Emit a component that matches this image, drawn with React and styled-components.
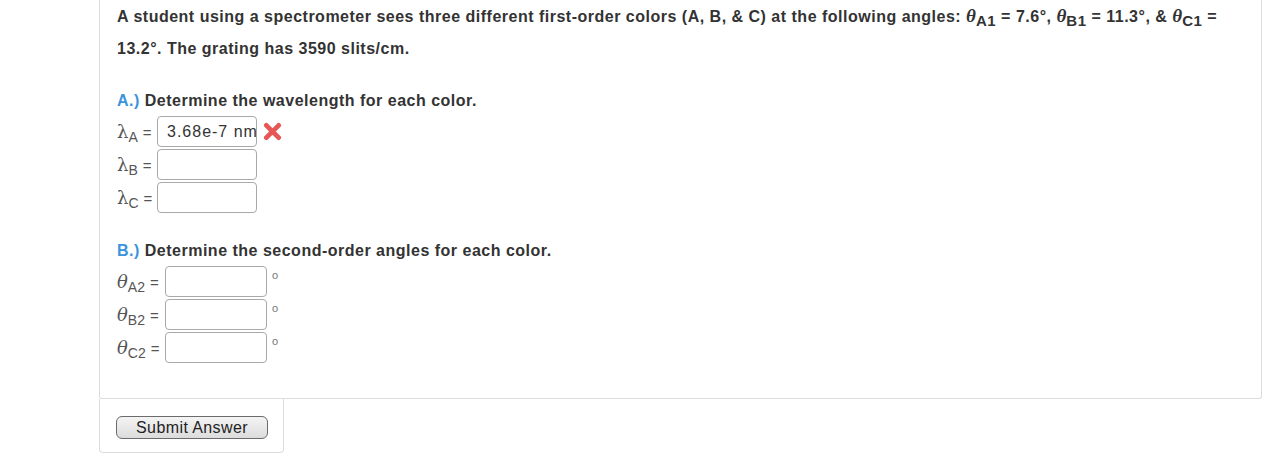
import styled, { createGlobalStyle } from 'styled-components'

const Global = createGlobalStyle`
    body {
        margin: 0;
        background: #ffffff;
        font-family: "Liberation Sans", Arial, sans-serif;
        color: #333333;
    }
`

const Page = styled.div`
    padding-left: 99px;
    width: 1163px;
`

const Panel = styled.div`
    border: 1px solid #dcdcdc;
    border-top: none;
    border-radius: 0 0 3px 3px;
    padding: 0 17px 34px 17px;
`

const Question = styled.p`
    margin: 0;
    font-size: 16px;
    letter-spacing: 0.5px;
    font-weight: bold;
    line-height: 32px;
    color: #333333;
    width: 1110px;
`

const Theta = styled.span`
    font-family: "Liberation Serif", "DejaVu Serif", serif;
    font-style: italic;
    font-size: 19px;
    letter-spacing: 0;
`

const Sub = styled.sub`
    font-size: 15px;
    vertical-align: -4px;
    line-height: 0;
`

const Part = styled.div`
    margin-top: ${p => p.$top}px;
`

const Heading = styled.div`
    font-size: 16px;
    letter-spacing: 0.5px;
    font-weight: bold;
    line-height: 18px;
    margin-bottom: 5px;
`

const PartTag = styled.span`
    color: #3b93dc;
`

const Row = styled.div`
    display: flex;
    align-items: center;
    height: 33px;
`

const Label = styled.span`
    display: inline-flex;
    align-items: baseline;
    color: #555555;
    font-size: 15px;
    width: ${p => p.$w}px;
    white-space: nowrap;
`

const Symbol = styled.span`
    font-family: "DejaVu Serif", "Liberation Serif", serif;
    font-style: ${p => (p.$italic ? 'italic' : 'normal')};
    font-size: 18px;
`

const LabelSub = styled.span`
    font-size: 14px;
    position: relative;
    top: 4px;
    margin-right: 5px;
`

const Field = styled.input`
    box-sizing: border-box;
    width: ${p => p.$w}px;
    height: 31px;
    border: 1px solid #a9a9a9;
    border-radius: 4px;
    padding: 0 0 0 9px;
    font-family: "Liberation Sans", Arial, sans-serif;
    font-size: 16px;
    letter-spacing: 1px;
    color: #333333;
    background: #ffffff;
    outline: none;
`

const Degree = styled.span`
    align-self: flex-start;
    margin: 4px 0 0 5px;
    color: #777777;
    font-size: 11px;
`

const Mark = styled.svg`
    margin-left: 6px;
`

const SubmitBox = styled.div`
    box-sizing: border-box;
    width: 185px;
    height: 54px;
    border: 1px solid #dcdcdc;
    border-top: none;
    border-radius: 0 0 4px 4px;
    padding: 17px 0 0 16px;
`

const SubmitButton = styled.button`
    width: 152px;
    height: 23px;
    border: 1px solid #6b6b6b;
    border-radius: 6px;
    background: linear-gradient(#f4f4f4, #dcdcdc);
    font-family: "Liberation Sans", Arial, sans-serif;
    font-size: 16px;
    letter-spacing: 0.4px;
    color: #222222;
    padding: 0;
    line-height: 20px;
`

const WrongMark = () => (
    <Mark width="19" height="19" viewBox="0 0 20 20">
        <path d="M3.5 3.5 L16.5 16.5 M16.5 3.5 L3.5 16.5" stroke="#e85656" strokeWidth="5" strokeLinecap="round" />
    </Mark>
)

const LambdaRow = ({ sub, value }) => (
    <Row>
        <Label $w={40}>
            <Symbol $italic={false}>λ</Symbol>
            <LabelSub>{sub}</LabelSub>=
        </Label>
        <Field $w={100} value={value || ''} readOnly />
        {value && <WrongMark />}
    </Row>
)

const ThetaRow = ({ sub }) => (
    <Row>
        <Label $w={48}>
            <Symbol $italic>θ</Symbol>
            <LabelSub>{sub}</LabelSub>=
        </Label>
        <Field $w={102} readOnly value="" />
        <Degree>o</Degree>
    </Row>
)

const App = () => {
    return (
        <>
            <Global />
            <Page>
                <Panel>
                    <Question>
                        A student using a spectrometer sees three different first-order colors (A, B, &amp; C) at the following angles:{' '}
                        <Theta>θ</Theta><Sub>A1</Sub> = 7.6°, <Theta>θ</Theta><Sub>B1</Sub> = 11.3°, &amp; <Theta>θ</Theta><Sub>C1</Sub> = 13.2°. The grating has 3590 slits/cm.
                    </Question>
                    <Part $top={27}>
                        <Heading><PartTag>A.)</PartTag> Determine the wavelength for each color.</Heading>
                        <LambdaRow sub="A" value="3.68e-7 nm" />
                        <LambdaRow sub="B" />
                        <LambdaRow sub="C" />
                    </Part>
                    <Part $top={28}>
                        <Heading><PartTag>B.)</PartTag> Determine the second-order angles for each color.</Heading>
                        <ThetaRow sub="A2" />
                        <ThetaRow sub="B2" />
                        <ThetaRow sub="C2" />
                    </Part>
                </Panel>
                <SubmitBox>
                    <SubmitButton>Submit Answer</SubmitButton>
                </SubmitBox>
            </Page>
        </>
    )
}

export default App
